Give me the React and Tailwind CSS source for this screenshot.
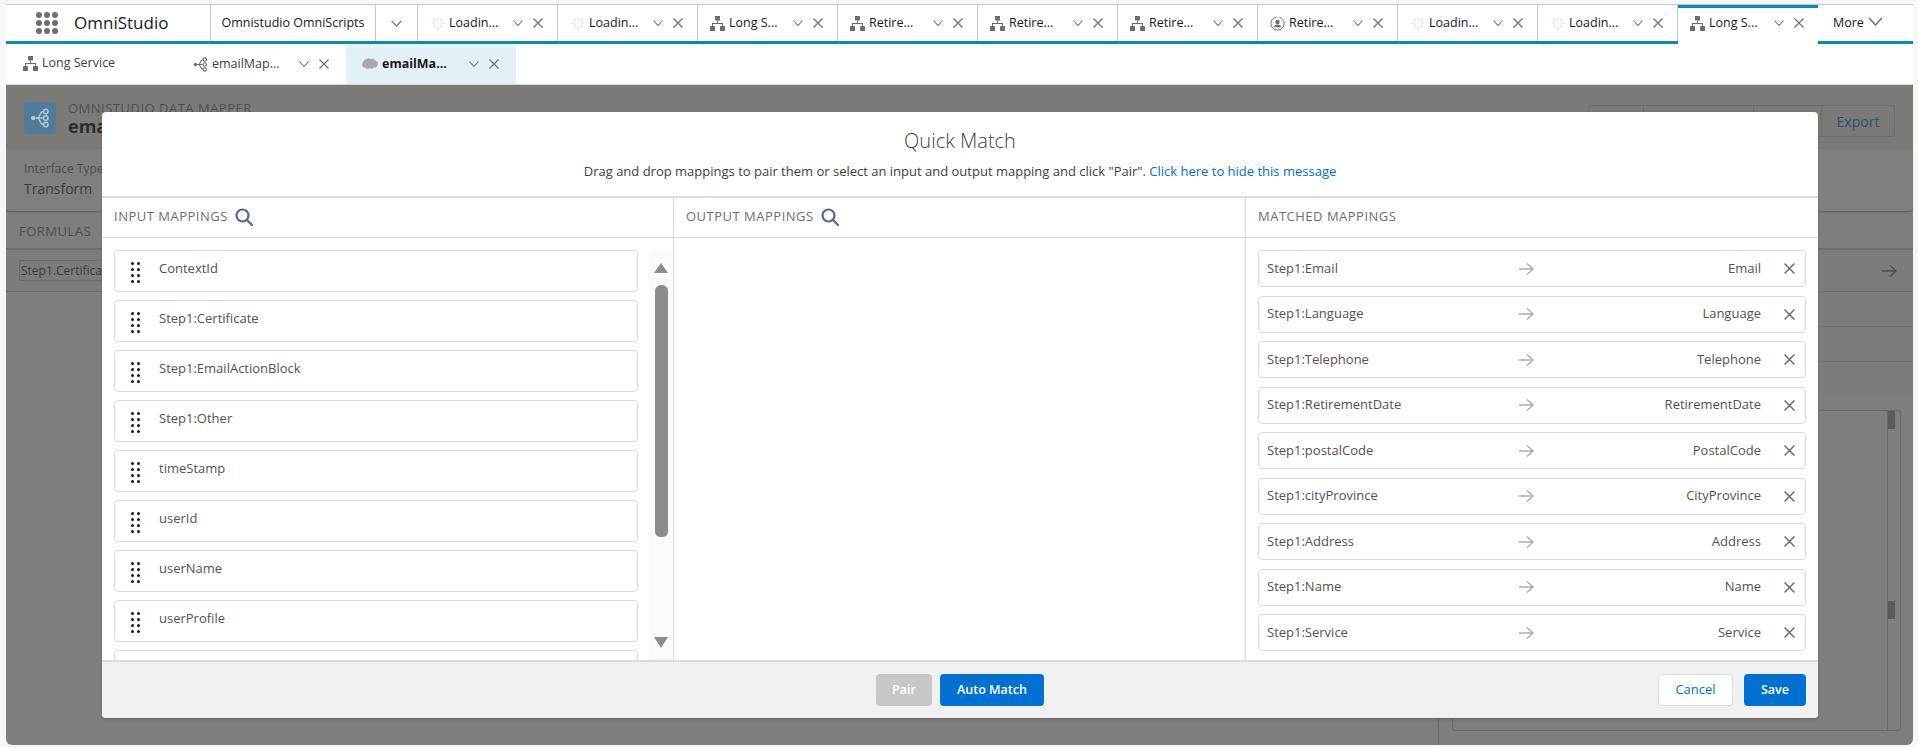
// OmniStudio Quick Match modal over a dimmed data mapper page
const FONT = "font-['Open_Sans','Noto_Sans',sans-serif]";

const Chevron = ({ size = 12, color = '#706e6b', width = 1.1 }) => (
  <svg width={size} height={size} viewBox="0 0 12 12" fill="none" stroke={color} strokeWidth={width} className="shrink-0">
    <path d="M1.5 3.5 L6 8.5 L10.5 3.5" />
  </svg>
);

const Close = ({ size = 10, color = '#706e6b', width = 1.2 }) => (
  <svg width={size} height={size} viewBox="0 0 10 10" fill="none" stroke={color} strokeWidth={width} className="shrink-0">
    <path d="M0.5 0.5 L9.5 9.5 M9.5 0.5 L0.5 9.5" />
  </svg>
);

const Hierarchy = () => (
  <svg width="15" height="15" viewBox="0 0 15 15" fill="#706e6b" className="shrink-0">
    <rect x="5" y="0" width="5" height="4.5" />
    <rect x="0" y="10" width="5" height="5" rx="0.5" />
    <rect x="10" y="10" width="5" height="5" rx="0.5" />
    <path d="M7 4.5h1v2.500h5v3h-1v-2h-9v2h-1v-3h5z" />
  </svg>
);

const Spinner = () => (
  <svg width="14" height="14" viewBox="0 0 14 14" stroke="#dedede" strokeWidth="1.1" className="shrink-0">
    <path d="M7 0.5v4M7 9.5v4M0.5 7h4M9.5 7h4M2.4 2.4l2.8 2.8M8.8 8.8l2.8 2.8M11.6 2.4l-2.8 2.8M5.2 8.8l-2.8 2.8" />
  </svg>
);

const PersonClock = () => (
  <svg width="15" height="15" viewBox="0 0 15 15" fill="none" stroke="#706e6b" className="shrink-0">
    <circle cx="7.5" cy="7.5" r="6.6" strokeDasharray="30 3" />
    <circle cx="7.5" cy="6" r="2.2" fill="#706e6b" stroke="none" />
    <path d="M3.8 11.2c.6-2 2-2.600 3.700-2.600s3.100.6 3.700 2.600z" fill="#706e6b" stroke="none" />
  </svg>
);

const NodeIcon = ({ size = 15, color = '#706e6b', width = 1.1 }) => (
  <svg width={size} height={size} viewBox="0 0 15 15" fill="none" stroke={color} strokeWidth={width} className="shrink-0">
    <circle cx="2.4" cy="7.5" r="1.7" fill={color} stroke="none" />
    <circle cx="11.8" cy="2.6" r="1.7" />
    <circle cx="11.8" cy="7.5" r="1.7" />
    <circle cx="11.8" cy="12.4" r="1.7" />
    <path d="M4 7.5h6M10.100 2.600c-3 0-2.600 4.900-4.600 4.900c2 0 1.600 4.900 4.600 4.900" />
  </svg>
);

const Cloud = () => (
  <svg width="16" height="12" viewBox="0 0 15 11" fill="#a9a9a9" className="shrink-0">
    <path d="M4 1c1-1 3-1.200 4 0c1.500-.8 3.500-.4 4 1c1.800.3 3 1.500 3 3.300c0 2.400-2 3.700-4 3.400c-1 1.400-3 1.400-4 .6c-1.200 1-3.300.9-4-.6c-1.800.2-3-1.200-3-3c0-1.300.6-2.200 1.600-2.600C1.800 1.800 2.800 .8 4 1z" />
  </svg>
);

const Search = () => (
  <svg width="18" height="18" viewBox="0 0 18 18" fill="none" stroke="#4f6a92" strokeWidth="2.2" className="shrink-0">
    <circle cx="7.5" cy="7.5" r="6" />
    <path d="M12 12l5 5" strokeLinecap="round" />
  </svg>
);

const Arrow = ({ color = '#b0adab', size = 16 }) => (
  <svg width={size} height={size} viewBox="0 0 16 16" fill="none" stroke={color} strokeWidth="1.5" className="shrink-0">
    <path d="M1 8h14M9 2.500L15 8l-6 5.500" />
  </svg>
);

const Grip = () => (
  <div className="grid grid-cols-2 gap-[3px] w-[9px] shrink-0">
    {Array.from({ length: 8 }).map((_, i) => (
      <span key={i} className="w-[3px] h-[3px] bg-[#181818] rounded-full" />
    ))}
  </div>
);

const topTabs = [
  { label: 'Loadin...', icon: <Spinner /> },
  { label: 'Loadin...', icon: <Spinner /> },
  { label: 'Long S...', icon: <Hierarchy /> },
  { label: 'Retire...', icon: <Hierarchy /> },
  { label: 'Retire...', icon: <Hierarchy /> },
  { label: 'Retire...', icon: <Hierarchy /> },
  { label: 'Retire...', icon: <PersonClock /> },
  { label: 'Loadin...', icon: <Spinner /> },
  { label: 'Loadin...', icon: <Spinner /> },
];

const inputs = ['ContextId', 'Step1:Certificate', 'Step1:EmailActionBlock', 'Step1:Other', 'timeStamp', 'userId', 'userName', 'userProfile', ''];

const matched = [
  ['Step1:Email', 'Email'],
  ['Step1:Language', 'Language'],
  ['Step1:Telephone', 'Telephone'],
  ['Step1:RetirementDate', 'RetirementDate'],
  ['Step1:postalCode', 'PostalCode'],
  ['Step1:cityProvince', 'CityProvince'],
  ['Step1:Address', 'Address'],
  ['Step1:Name', 'Name'],
  ['Step1:Service', 'Service'],
];

function WorkspaceTab({ label, icon, active }) {
  return (
    <div
      className={`w-[140px] shrink-0 flex items-center pl-[12px] pr-[14px] ${
        active
          ? 'relative self-start h-[39px] border-t-[3px] border-[#0a8bb5] pb-[6px] bg-white'
          : 'border-r border-[#c9c7c5]'
      }`}
    >
      <span className="w-[15px] flex justify-center shrink-0">{icon}</span>
      <span className="ml-[4px] flex-1 min-w-0 text-[12.5px] text-[#181818] whitespace-nowrap">{label}</span>
      <Chevron />
      <span className="ml-[9px]"><Close /></span>
    </div>
  );
}

function DimmedPage() {
  return (
    <div className="flex-1 min-h-0 mr-[5px] ml-[6px] bg-[#7f7e7c] rounded-b-[6px] flex flex-col overflow-hidden text-[13px] text-[#3b3a39]">
      <div className="h-[64px] shrink-0 bg-[#7b7a77] flex items-start pl-[18px] pr-[18px] pt-[17px]">
        <div className="w-[32px] h-[32px] rounded-[4px] bg-[#4f7a9a] flex items-center justify-center">
          <NodeIcon size={20} color="#b4c6d4" width={1.1} />
        </div>
        <div className="ml-[12px] flex-1">
          <div className="text-[13px] leading-[13px] tracking-[0.5px] text-[#514f4d]">OMNISTUDIO DATA MAPPER</div>
          <div className="text-[18px] leading-[20px] font-bold text-[#2e2d2c] mt-[1px]">emailMapping</div>
        </div>
        <div className="flex h-[32px] mt-[3px] border border-[#6f6e6c] rounded-[3px]">
          <div className="w-[55px] border-r border-[#6f6e6c]" />
          <div className="w-[110px] border-r border-[#6f6e6c]" />
          <div className="w-[68px] border-r border-[#6f6e6c]" />
          <div className="w-[72px] flex items-center justify-center text-[#2b4e73] text-[14px]">Export</div>
        </div>
      </div>
      <div className="h-[62px] shrink-0 bg-[#807f7d] rounded-b-[4px] shadow-[0_1px_2px_rgba(0,0,0,0.25)] pl-[18px] pt-[11px]">
        <div className="text-[12px] leading-[18px] text-[#4f4e4c]">Interface Type</div>
        <div className="text-[14px] leading-[22px]">Transform</div>
      </div>
      <div className="h-[39px] shrink-0 border-b-2 border-[#6c6b69] pl-[13px] pt-[11px] text-[13px] leading-[18px] tracking-[0.5px] text-[#4f4e4c]">FORMULAS</div>
      <div className="h-[42px] shrink-0 bg-[#7d7c7a] border-b border-[#6c6b69] flex items-center pl-[13px] pr-[16px] justify-between">
        <span className="w-[110px] h-[21px] border border-[#6c6b69] rounded-[2px] leading-[19px] px-[1px] overflow-hidden whitespace-nowrap text-[12px]">Step1.Certificate</span>
        <Arrow color="#4f4e4c" />
      </div>
      <div className="h-[35px] shrink-0 ml-auto w-[475px] bg-[#7d7c7a] border-b border-[#6c6b69]" />
      <div className="h-[35px] shrink-0 ml-auto w-[475px] bg-[#7d7c7a] border-b border-[#6c6b69]" />
      <div className="h-[34px] shrink-0 ml-auto w-[475px] bg-[#7d7c7a]" />
      <div className="flex-1 flex justify-end">
        <div className="w-[475px] border-l border-[#6c6b69] pl-[13px] pt-[14px] pb-[14px] pr-[12px]">
          <div className="h-full border border-[#6c6b69] rounded-[3px] flex justify-end">
            <div className="w-[13px] border-l border-[#6c6b69] flex flex-col">
              <div className="w-[7px] h-[18px] bg-[#5c5b5a]" />
              <div className="w-[7px] h-[18px] bg-[#5c5b5a] mt-[172px]" />
            </div>
          </div>
        </div>
      </div>
    </div>
  );
}

function ColumnHeader({ title, search }) {
  return (
    <div className="h-[40px] border-b border-[#dddbda] flex items-center gap-[7px] pb-[1px] pl-[12px]">
      <span className="text-[13px] tracking-[0.5px] text-[#706e6b] whitespace-nowrap">{title}</span>
      {search && <Search />}
    </div>
  );
}

function QuickMatch() {
  return (
    <div className="absolute left-[102px] top-[112px] w-[1716px] h-[606px] bg-white rounded-[4px] overflow-hidden flex flex-col shadow-[0_2px_3px_rgba(0,0,0,0.16)]">
      <div className="h-[86px] shrink-0 flex flex-col items-center pt-[15px] border-b-2 border-[#dddbda]">
        <h2 className="text-[20px] leading-[28px] font-light text-[#3e3e3c]">Quick Match</h2>
        <p className="mt-[7px] text-[13px] leading-[18px] text-[#3e3e3c]">
          Drag and drop mappings to pair them or select an input and output mapping and click "Pair". <a className="text-[#0070d2]">Click here to hide this message</a>
        </p>
      </div>

      <div className="flex-1 min-h-0 flex">
        <div className="w-[572px] shrink-0 border-r border-[#dddbda] flex flex-col">
          <ColumnHeader title="INPUT MAPPINGS" search />
          <div className="flex-1 min-h-0 flex pl-[12px] pt-[12px] overflow-hidden">
            <div className="w-[524px] shrink-0 flex flex-col gap-[8px]">
              {inputs.map((name, i) => (
                <div key={i} className="h-[42px] shrink-0 border border-[#dddbda] rounded-[4px] flex items-start pl-[16px] pt-[8px] text-[13px] leading-[18px] text-[#54514f]">
                  {name && (
                    <>
                      <span className="mt-[3px]"><Grip /></span>
                      <span className="ml-[19px]">{name}</span>
                    </>
                  )}
                </div>
              ))}
            </div>
            <div className="ml-[12px] w-[22px] shrink-0 bg-[#fafafa] flex flex-col items-center">
              <div className="mt-[13px] w-0 h-0 border-x-[7.5px] border-x-transparent border-b-[10px] border-b-[#8c8c8c]" />
              <div className="mt-[12px] w-[13px] h-[252px] bg-[#8c8c8c] rounded-t-[6px] rounded-b-[5px]" />
              <div className="mt-[100px] w-0 h-0 border-x-[7.5px] border-x-transparent border-t-[11px] border-t-[#8c8c8c]" />
            </div>
          </div>
        </div>

        <div className="w-[572px] shrink-0 border-r border-[#dddbda]">
          <ColumnHeader title="OUTPUT MAPPINGS" search />
        </div>

        <div className="flex-1 min-w-0 flex flex-col">
          <ColumnHeader title="MATCHED MAPPINGS" />
          <div className="flex flex-col gap-[8.5px] pl-[12px] pr-[12px] pt-[12px]">
            {matched.map(([from, to]) => (
              <div key={from} className="h-[37px] shrink-0 border border-[#dddbda] rounded-[4px] flex items-center pl-[8px] pr-[10px] text-[13px] text-[#54514f]">
                <span className="w-[251px] shrink-0 whitespace-nowrap">{from}</span>
                <Arrow />
                <span className="flex-1 min-w-0 text-right whitespace-nowrap">{to}</span>
                <span className="ml-[23px]"><Close size={11} width={1.4} /></span>
              </div>
            ))}
          </div>
        </div>
      </div>

      <div className="h-[58px] shrink-0 bg-[#f0f0f0] border-t-2 border-[#dddbda] flex items-center pl-[774px] pr-[12px] text-[13px]">
        <button className="w-[56px] h-[32px] rounded-[4px] bg-[#c9c7c5] text-white font-semibold text-[12.5px]">Pair</button>
        <button className="ml-[8px] w-[104px] h-[32px] rounded-[4px] bg-[#0070d2] text-white font-semibold text-[12.5px]">Auto Match</button>
        <button className="ml-auto w-[75px] h-[32px] rounded-[4px] bg-white border border-[#dddbda] text-[#0070d2]">Cancel</button>
        <button className="ml-[11px] w-[62px] h-[32px] rounded-[4px] bg-[#0070d2] text-white font-semibold text-[12.5px]">Save</button>
      </div>
    </div>
  );
}

export default function App() {
  return (
    <div className={`relative h-[747px] w-[1918px] overflow-hidden bg-[#f7f7f7] flex flex-col pt-[4px] ${FONT}`}>
      <div className="h-[40px] shrink-0 ml-[6px] mr-[5px] bg-white border-t border-[#c9c7c5] border-b-[3px] border-b-[#0a8bb5] flex">
        <div className="w-[205px] shrink-0 flex items-center border-r border-[#c9c7c5] pl-[30px]">
          <div className="grid grid-cols-3 gap-[2.5px] w-[22px]">
            {Array.from({ length: 9 }).map((_, i) => (
              <span key={i} className="w-[5.5px] h-[5.5px] rounded-full bg-[#706e6b]" />
            ))}
          </div>
          <span className="ml-[16px] text-[17px] leading-[24px] text-[#181818]">OmniStudio</span>
        </div>
        <div className="w-[165px] shrink-0 flex items-center justify-center border-r border-[#c9c7c5] text-[12.5px] text-[#181818] whitespace-nowrap">Omnistudio OmniScripts</div>
        <div className="w-[42px] shrink-0 flex items-center justify-center border-r border-[#c9c7c5]"><Chevron size={13} /></div>
        {topTabs.map((tab, i) => (
          <WorkspaceTab key={i} label={tab.label} icon={tab.icon} />
        ))}
        <WorkspaceTab active label="Long S..." icon={<Hierarchy />} />
        <div className="flex-1 flex items-center pl-[15px] text-[12.5px] text-[#181818]">
          More
          <span className="ml-[3px] -mt-[3px]"><Chevron size={17} width={1} /></span>
        </div>
      </div>

      <div className="h-[41px] shrink-0 ml-[6px] mr-[5px] bg-white border-b border-[#dddbda] flex">
        <div className="w-[170px] shrink-0 flex items-center pl-[17px] text-[12.5px] text-[#3e3e3c] pb-[1px]">
          <Hierarchy />
          <span className="ml-[4px]">Long Service</span>
        </div>
        <div className="w-[170px] shrink-0 flex items-center pl-[17px] pr-[17px] text-[12.5px] text-[#3e3e3c]">
          <NodeIcon />
          <span className="ml-[4px] flex-1 whitespace-nowrap">emailMap...</span>
          <Chevron />
          <span className="ml-[9px]"><Close /></span>
        </div>
        <div className="w-[170px] shrink-0 flex items-center pl-[16px] pr-[17px] bg-[#e3f0f6] text-[12.5px] font-bold text-[#181818]">
          <Cloud />
          <span className="ml-[4px] flex-1 whitespace-nowrap">emailMa...</span>
          <Chevron />
          <span className="ml-[9px]"><Close /></span>
        </div>
      </div>

      <div className="flex-1 min-h-0 flex flex-col pb-[2px]">
        <DimmedPage />
      </div>

      <QuickMatch />
    </div>
  );
}
